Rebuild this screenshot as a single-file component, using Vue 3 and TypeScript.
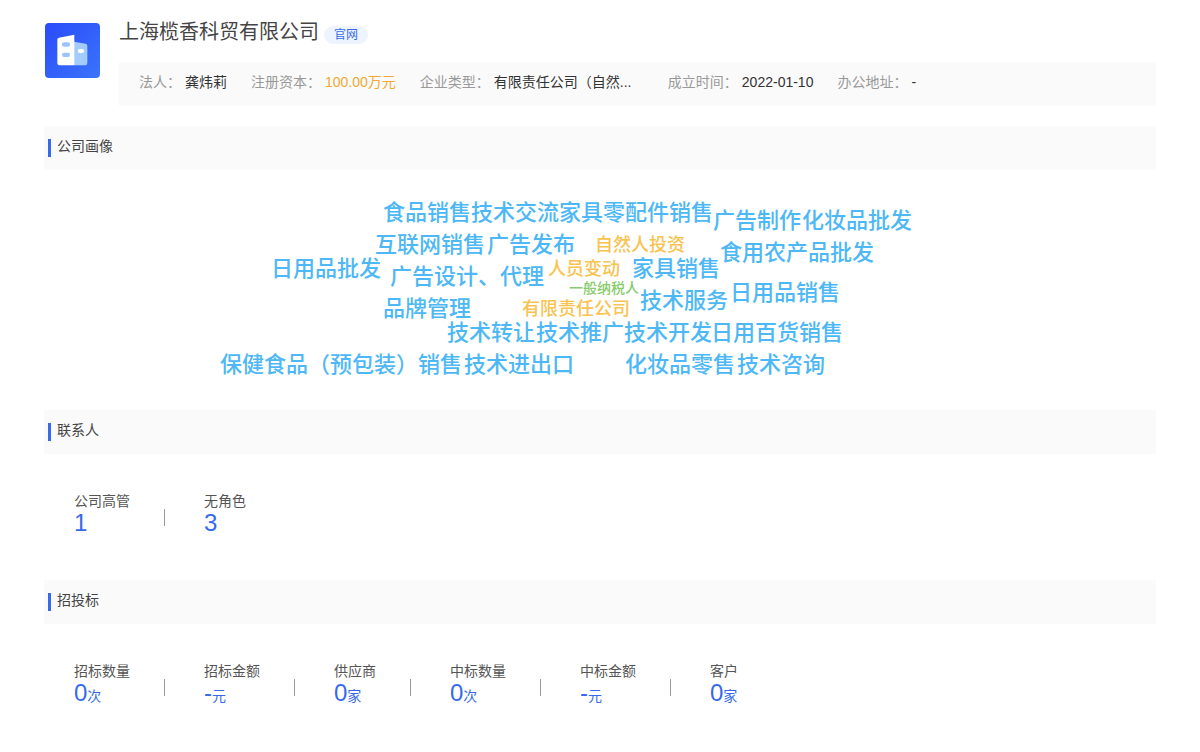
<script setup lang="ts">
interface Field {
  label: string
  value: string
  highlight?: boolean
}

interface Word {
  text: string
  x: number
  y: number
  kind?: 'medium' | 'small'
}

interface Stat {
  label: string
  value: string
  unit?: string
}

const fields: Field[] = [
  { label: '法人：', value: '龚炜莉' },
  { label: '注册资本：', value: '100.00万元', highlight: true },
  { label: '企业类型：', value: '有限责任公司（自然...' },
  { label: '成立时间：', value: '2022-01-10' },
  { label: '办公地址：', value: '-' },
]

// x: left edge relative to the centre of the cloud; y: vertical middle of the word
const words: Word[] = [
  { text: '食品销售技术交流', x: -217, y: 43 },
  { text: '家具零配件销售', x: -41, y: 43 },
  { text: '广告制作', x: 113, y: 51 },
  { text: '化妆品批发', x: 202, y: 51 },
  { text: '互联网销售', x: -225, y: 75 },
  { text: '广告发布', x: -113, y: 75 },
  { text: '自然人投资', x: -5, y: 75, kind: 'medium' },
  { text: '食用农产品批发', x: 120, y: 83 },
  { text: '日用品批发', x: -329, y: 99 },
  { text: '人员变动', x: -52, y: 99, kind: 'medium' },
  { text: '家具销售', x: 32, y: 99 },
  { text: '广告设计、代理', x: -210, y: 107 },
  { text: '一般纳税人', x: -31, y: 118, kind: 'small' },
  { text: '日用品销售', x: 130, y: 123 },
  { text: '技术服务', x: 40, y: 131 },
  { text: '品牌管理', x: -217, y: 139 },
  { text: '有限责任公司', x: -78, y: 139, kind: 'medium' },
  { text: '技术转让', x: -153, y: 163 },
  { text: '技术推广', x: -64, y: 163 },
  { text: '技术开发', x: 24, y: 163 },
  { text: '日用百货销售', x: 111, y: 163 },
  { text: '保健食品（预包装）销售', x: -380, y: 195 },
  { text: '技术进出口', x: -136, y: 195 },
  { text: '化妆品零售', x: 25, y: 195 },
  { text: '技术咨询', x: 137, y: 195 },
]

const sections: { title: string; stats: Stat[] }[] = [
  {
    title: '联系人',
    stats: [
      { label: '公司高管', value: '1' },
      { label: '无角色', value: '3' },
    ],
  },
  {
    title: '招投标',
    stats: [
      { label: '招标数量', value: '0', unit: '次' },
      { label: '招标金额', value: '-', unit: '元' },
      { label: '供应商', value: '0', unit: '家' },
      { label: '中标数量', value: '0', unit: '次' },
      { label: '中标金额', value: '-', unit: '元' },
      { label: '客户', value: '0', unit: '家' },
    ],
  },
]
</script>

<template>
  <main class="page">
    <header class="company">
      <svg class="logo" viewBox="0 0 165 165" aria-hidden="true">
        <defs>
          <linearGradient id="logo-bg" x1="0" y1="0" x2="1" y2="1">
            <stop offset="0" stop-color="#2a4bfb" />
            <stop offset="1" stop-color="#3a74fb" />
          </linearGradient>
        </defs>
        <rect width="165" height="165" rx="12" fill="url(#logo-bg)" />
        <path d="M87 56 L122 62 Q127 63 127 68 V120 Q127 127 120 127 H87 Z" fill="#a3cbfb" />
        <path d="M37 50 Q37 45 42 44 L88 35 V127 H45 Q37 127 37 119 Z" fill="#fff" />
        <rect x="51" y="58" width="24" height="13" rx="6" fill="#9cc4f8" />
        <rect x="51" y="89" width="24" height="13" rx="6" fill="#9cc4f8" />
        <rect x="98" y="78" width="19" height="12" rx="6" fill="#fff" />
      </svg>
      <div class="summary">
        <div class="heading">
          <h1>上海榄香科贸有限公司</h1>
          <a class="tag" href="#">官网</a>
        </div>
        <dl class="fields">
          <div v-for="field in fields" :key="field.label" class="field">
            <dt>{{ field.label }}</dt>
            <dd :class="{ highlight: field.highlight }">{{ field.value }}</dd>
          </div>
        </dl>
      </div>
    </header>

    <section>
      <h2>公司画像</h2>
      <div class="cloud">
        <span
          v-for="word in words"
          :key="word.text"
          class="word"
          :class="word.kind"
          :style="{ left: `calc(50% + ${word.x}px)`, top: `${word.y}px` }"
        >{{ word.text }}</span>
      </div>
    </section>

    <section v-for="section in sections" :key="section.title">
      <h2>{{ section.title }}</h2>
      <dl class="stats">
        <div v-for="stat in section.stats" :key="stat.label" class="stat">
          <dt>{{ stat.label }}</dt>
          <dd>{{ stat.value }}<small v-if="stat.unit">{{ stat.unit }}</small></dd>
        </div>
      </dl>
    </section>
  </main>
</template>

<style>
body {
  margin: 0;
  background: #fff;
}
</style>

<style scoped>
.page {
  padding: 18px 44px 0;
  font-family: "Liberation Sans", "Noto Sans CJK SC", sans-serif;
  font-size: 14px;
  line-height: 20px;
  color: #444;
}

h1,
h2,
dl,
dd {
  margin: 0;
  font-weight: 400;
}

.company {
  display: flex;
  gap: 19px;
  margin-bottom: 20px;
  padding-left: 1px;
}

.logo {
  flex: none;
  width: 55px;
  height: 55px;
  margin-top: 5px;
}

.summary {
  flex: 1;
  min-width: 0;
}

.heading {
  display: flex;
  align-items: flex-start;
  gap: 5px;
  height: 44px;
}

h1 {
  font-size: 20px;
  line-height: 28px;
}

.tag {
  margin-top: 8px;
  padding: 0 10px;
  border-radius: 9px;
  background: #edf4fe;
  color: #3a6bea;
  font-size: 12px;
  line-height: 18px;
  text-decoration: none;
}

.fields {
  display: flex;
  gap: 24px;
  padding: 10px 20px 14px;
  background: #fafafa;
}

.field {
  display: flex;
  gap: 4px;
  white-space: nowrap;
}

.field dt {
  color: #999;
}

.field dd {
  color: #333;
}

.field:nth-child(3) dd {
  min-width: 150px;
}

.field .highlight {
  color: #f0a833;
}

h2 {
  display: flex;
  align-items: flex-start;
  gap: 6px;
  padding: 10px 4px 13px;
  background: #fafafa;
  font-size: 14px;
  line-height: 21px;
}

h2::before {
  content: "";
  width: 3px;
  height: 18px;
  margin-top: 3px;
  background: #366aea;
}

.cloud {
  position: relative;
  height: 240px;
}

.word {
  position: absolute;
  transform: translateY(-50%);
  color: #4db8f5;
  font-size: 22px;
  font-weight: 500;
  line-height: 32px;
  white-space: nowrap;
}

.medium {
  color: #f8c350;
  font-size: 18px;
}

.small {
  color: #87cb6b;
  font-size: 14px;
}

.stats {
  display: flex;
  padding: 37px 30px 45px;
}

.stat {
  display: grid;
  grid-template-columns: auto auto;
  column-gap: 34px;
}

.stat:not(:last-child)::after {
  content: "";
  grid-area: 1 / 2 / 3 / 3;
  width: 1px;
  height: 17px;
  margin: 18px 39px 0 0;
  background: #999;
}

.stat dt {
  color: #555;
}

.stat dd {
  grid-column: 1;
  height: 24px;
  color: #366aea;
  font-size: 24px;
  line-height: 24px;
}

small {
  font-size: 14px;
}
</style>
